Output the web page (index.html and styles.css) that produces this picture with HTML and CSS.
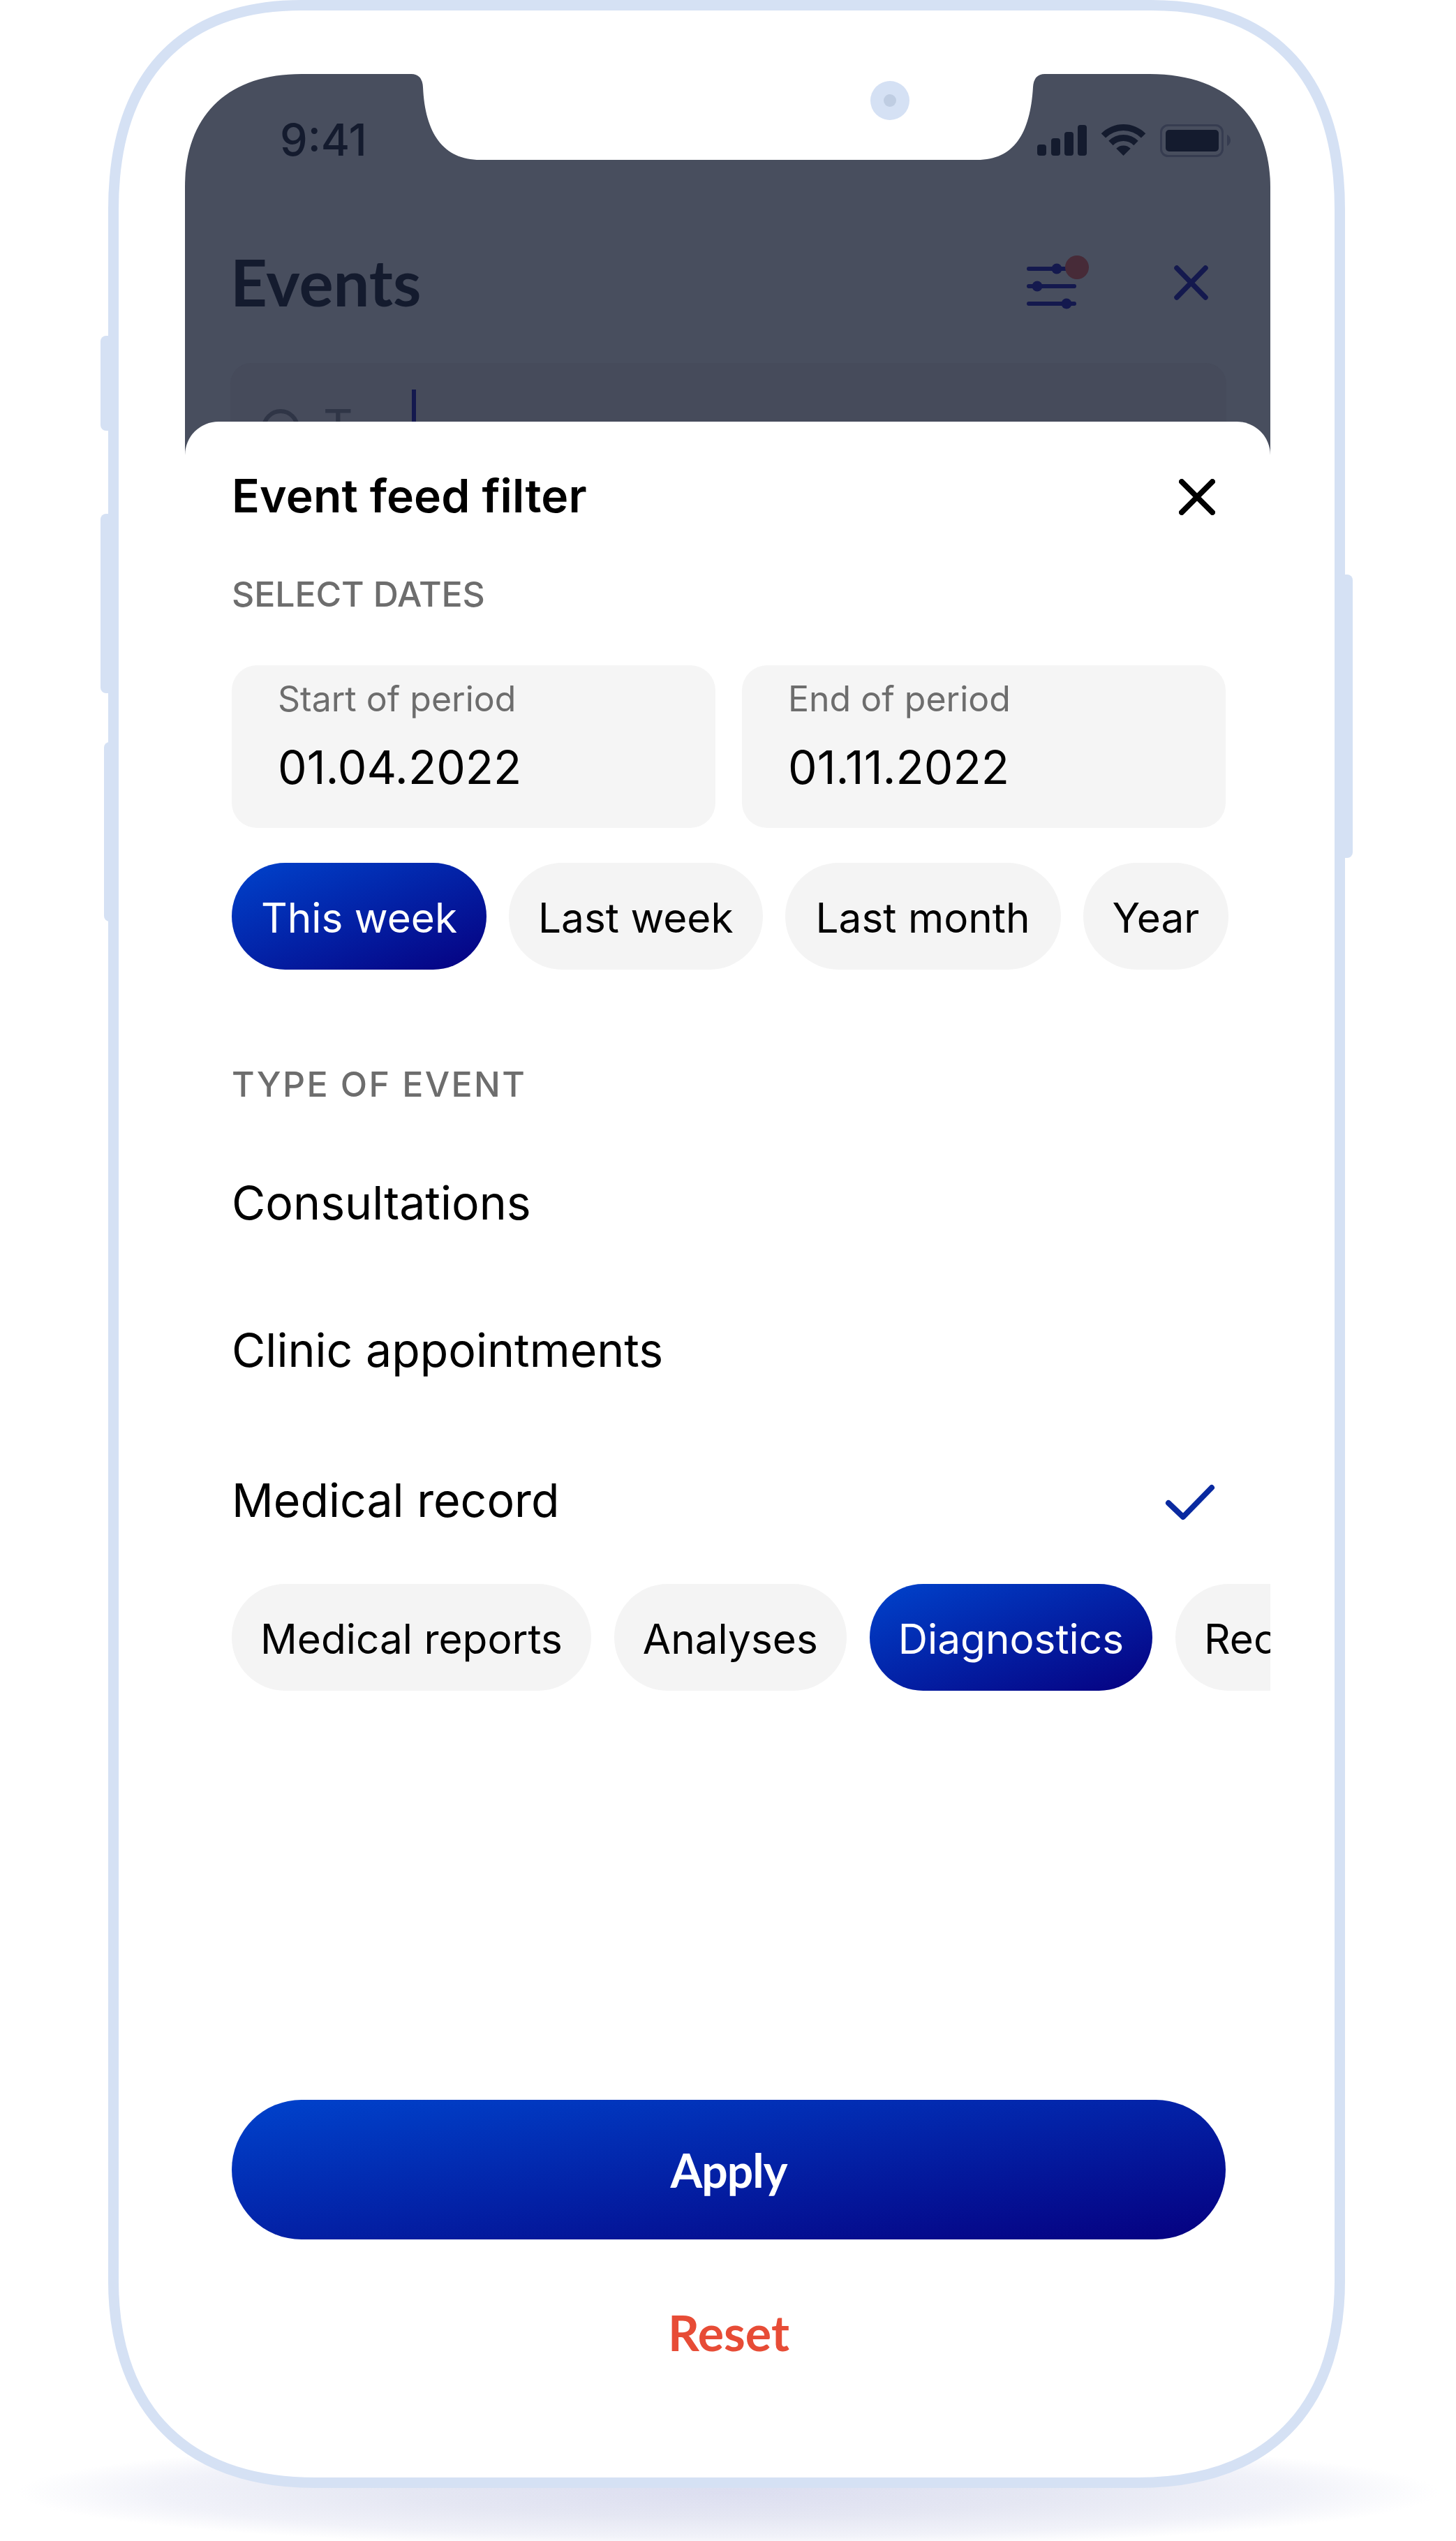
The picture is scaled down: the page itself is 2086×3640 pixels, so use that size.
FILE: index.html
```html
<!DOCTYPE html>
<html lang="en">
<head>
<meta charset="utf-8">
<title>Event feed filter</title>
<link rel="stylesheet" href="styles.css">
</head>
<body>
<div class="stage">
  <div class="floor-shadow"></div>
  <div class="side-btn side-btn-a"></div>
  <div class="side-btn side-btn-b"></div>
  <div class="side-btn side-btn-c"></div>
  <div class="side-btn side-btn-r"></div>
  <div class="phone">
    <svg class="frame" width="1772" height="3564" viewBox="0 0 1772 3564">
      <path d="M7.5 300C7.5 115 100 7.5 277 7.5L1495 7.5C1672 7.5 1764.5 115 1764.5 300L1764.5 3268C1764.5 3430 1680 3556.5 1475 3556.5L297 3556.5C92 3556.5 7.5 3430 7.5 3268Z" fill="#fff" stroke="#d5e1f4" stroke-width="15"/>
    </svg>
    <div class="camera"><div class="lens"></div></div>
    <div class="screen">
      <div class="app">
        <div class="status">
          <span class="time">9:41</span>
          <svg class="status-icons" width="277" height="47" viewBox="0 0 277 47">
            <rect x="0" y="29" width="13" height="16" rx="4" fill="#141b2e"/>
            <rect x="20" y="20" width="13" height="25" rx="4" fill="#141b2e"/>
            <rect x="39" y="11" width="13" height="34" rx="4" fill="#141b2e"/>
            <rect x="58" y="1" width="13" height="44" rx="4" fill="#141b2e"/>
            <g transform="translate(92 0)" fill="#141b2e">
              <path d="M-.3 13.2A45 45 0 0 1 63.3 13.2L56.9 19.6A36 36 0 0 0 6.1 19.6Z"/>
              <path d="M10.3 23.8A30 30 0 0 1 52.7 23.8L46.35 30.15A21 21 0 0 0 16.65 30.15Z"/>
              <path d="M21.25 34.75A14.5 14.5 0 0 1 41.75 34.75L31.5 45Z"/>
            </g>
            <rect x="177.5" y="1.5" width="88" height="44" rx="10" fill="none" stroke="#363c50" stroke-width="3"/>
            <rect x="184" y="8" width="76" height="31" rx="5" fill="#141b2e"/>
            <path d="M272 15C275 16 277 20 277 23C277 26 275 30 272 31Z" fill="#363c50"/>
          </svg>
        </div>
        <div class="app-head">
          <h1 class="app-title">Events</h1>
          <svg class="filter-icon" width="91" height="78" viewBox="0 0 91 78">
            <g stroke="#14194e" stroke-width="6" stroke-linecap="round">
              <line x1="3" y1="19" x2="68" y2="19"/>
              <line x1="3" y1="44" x2="68" y2="44"/>
              <line x1="3" y1="69" x2="68" y2="69"/>
            </g>
            <circle cx="43" cy="19" r="7.5" fill="#14194e"/>
            <circle cx="15" cy="44" r="7.5" fill="#14194e"/>
            <circle cx="57" cy="69" r="7.5" fill="#14194e"/>
            <circle cx="72" cy="17" r="17" fill="#472b38"/>
          </svg>
          <svg class="app-close" width="49" height="50" viewBox="0 0 49 50">
            <path d="M4 4L45 46M45 4L4 46" stroke="#14194e" stroke-width="7.5" stroke-linecap="round" fill="none"/>
          </svg>
        </div>
        <div class="search">
          <svg class="search-icon" width="56" height="56" viewBox="0 0 56 56"><circle cx="28" cy="28" r="24" fill="none" stroke="#2f3546" stroke-width="6"/></svg>
          <span class="search-text">T</span>
          <span class="caret"></span>
        </div>
      </div>
      <div class="sheet">
        <div class="sheet-head">
          <h2 class="sheet-title">Event feed filter</h2>
          <svg class="sheet-close" width="52" height="52" viewBox="0 0 52 52">
            <path d="M4 4L48 48M48 4L4 48" stroke="#000" stroke-width="8" stroke-linecap="round" fill="none"/>
          </svg>
        </div>
        <div class="section-label first">SELECT DATES</div>
        <div class="dates">
          <div class="date-card">
            <div class="date-label">Start of period</div>
            <div class="date-value">01.04.2022</div>
          </div>
          <div class="date-card">
            <div class="date-label">End of period</div>
            <div class="date-value">01.11.2022</div>
          </div>
        </div>
        <div class="chips period-chips">
          <span class="chip active">This week</span>
          <span class="chip">Last week</span>
          <span class="chip wide">Last month</span>
          <span class="chip">Year</span>
        </div>
        <div class="section-label second">TYPE OF EVENT</div>
        <div class="type-list">
          <div class="type-row">Consultations</div>
          <div class="type-row">Clinic appointments</div>
          <div class="type-row">Medical record
            <svg class="check" width="72" height="52" viewBox="0 0 72 52">
              <path d="M5 27L26 47L67 5" stroke="#0a2aa0" stroke-width="8" stroke-linecap="round" stroke-linejoin="round" fill="none"/>
            </svg>
          </div>
        </div>
        <div class="chips record-chips">
          <span class="chip">Medical reports</span>
          <span class="chip">Analyses</span>
          <span class="chip active">Diagnostics</span>
          <span class="chip">Recommendations</span>
        </div>
        <button class="apply" type="button">Apply</button>
        <div class="reset">Reset</div>
      </div>
    </div>
  </div>
</div>
</body>
</html>
```
FILE: styles.css
```css
* { box-sizing: border-box; }
html, body { margin: 0; padding: 0; background: #fff; }
body { font-family: Inter, "Liberation Sans", sans-serif; color: #000; }
h1, h2 { margin: 0; font: inherit; }

.stage { position: relative; width: 2086px; height: 3640px; overflow: hidden; background: #fff; }

.floor-shadow {
  position: absolute; left: 24px; top: 3490px; width: 2038px; height: 160px;
  background: radial-gradient(closest-side, #dcdef0 0%, #e5e7f3 45%, #f1f2f9 80%, #fff 100%);
}

.side-btn { position: absolute; background: #d5e1f4; border-radius: 8px 0 0 8px; }
.side-btn-a { left: 144px; top: 481px; width: 30px; height: 136px; }
.side-btn-b { left: 144px; top: 736px; width: 30px; height: 257px; }
.side-btn-c { left: 149px; top: 1063px; width: 30px; height: 257px; }
.side-btn-r { left: 1900px; top: 823px; width: 38px; height: 406px; border-radius: 0 8px 8px 0; }

.phone {
  position: relative; margin-left: 155px; width: 1772px; height: 3564px;
  padding: 106px 107px 0 110px;
}
.frame { position: absolute; left: 0; top: 0; }

.camera {
  position: absolute; left: 1092px; top: 116px; width: 56px; height: 56px;
  display: flex; align-items: center; justify-content: center;
  background: #d5e1f4; border-radius: 50%;
}
.lens { width: 18px; height: 18px; border-radius: 50%; background: #bfcde2; }

.screen {
  position: relative;
  width: 1555px; height: 3334px; display: flex; flex-direction: column;
  clip-path: path("M0 162C0 60 60 0 167 0L324 0Q340 0 341 19C344 85 370 123 423 123L1135 123C1188 123 1211 85 1215 19Q1216 0 1232 0L1382 0C1490 0 1555 60 1555 162L1555 3334L0 3334Z");
}

.app { height: 546px; margin-bottom: -48px; flex: none; overflow: hidden; background: #484e5e; color: #141b2e; }

.status { display: flex; justify-content: space-between; align-items: flex-start; height: 230px; padding: 64px 57px 0 137px; }
.status-icons { margin-top: 8px; }
.time { font-size: 63px; line-height: 60px; font-weight: 500; margin-left: -1px; }

.app-head { display: flex; align-items: center; height: 124px; padding: 12px 89px 0 65px; }
.app-title { font-family: Lato, Inter, sans-serif; font-weight: 700; font-size: 92px; line-height: 100px; flex: 1; }
.filter-icon { margin-right: 120px; margin-top: 2px; flex: none; }
.app-close { flex: none; margin-top: 2px; }

.search {
  display: flex; align-items: flex-start; margin: 60px 63px 0 65px; height: 200px;
  padding: 38px 0 0 44px; background: #464b5b; border-radius: 30px;
}
.search-icon { margin-top: 27px; flex: none; }
.search-text { margin-left: 33px; margin-top: 12px; font-size: 66px; line-height: 80px; color: #2f3546; }
.caret { width: 6px; height: 90px; margin-left: 84px; background: #14194e; flex: none; }

.sheet {
  flex: 1; display: flex; flex-direction: column; position: relative;
  padding: 66px 64px 49px 67px; background: #fff; border-radius: 48px 48px 0 0; overflow: hidden;
}
.sheet-head { display: flex; align-items: center; justify-content: space-between; height: 80px; padding-right: 15px; }
.sheet-title { font-size: 66px; line-height: 80px; font-weight: 600; letter-spacing: .15px; }
.sheet-close { flex: none; margin-top: 4px; }

.section-label { height: 60px; font-size: 50px; line-height: 60px; font-weight: 500; color: #6d6d6d; }
.section-label.first { margin-top: 71px; letter-spacing: -.1px; }
.section-label.second { margin-top: 134px; letter-spacing: 2.4px; }

.dates { display: flex; gap: 38px; margin-top: 72px; }
.date-card { flex: 1; height: 233px; padding: 20px 0 0 66px; background: #f5f5f5; border-radius: 36px; }
.date-label { font-size: 50px; line-height: 56px; color: #6d6d6d; }
.date-value { margin-top: 30px; font-size: 66px; line-height: 80px; }

.chips { display: flex; gap: 33px; flex: none; }
.period-chips { margin-top: 50px; width: 1500px; gap: 32px; }
.record-chips { margin-top: 14px; }
.chip {
  flex: none; height: 153px; display: flex; align-items: center; padding: 3px 41px 0;
  font-size: 58.5px; background: #f4f4f4; border-radius: 77px; white-space: nowrap;
}
.period-chips .chip { padding: 3px 42px 0; }
.period-chips .chip.wide { padding: 3px 44px 0; }
.chip.active { color: #fff; background: linear-gradient(to bottom right, #0043cc 0%, #060080 100%); }

.type-list { margin-top: 33px; }
.type-row { display: flex; align-items: center; justify-content: space-between; height: 213px; font-size: 66.2px; padding-right: 15px; }
.type-row:nth-child(2) { padding-bottom: 3px; }
.check { margin-top: 6px; }

.apply {
  flex: none; margin-top: auto; height: 200px; border: 0; border-radius: 100px; color: #fff;
  font-family: Lato, Inter, sans-serif; font-size: 66px; font-weight: 700; letter-spacing: -1px;
  background: linear-gradient(to bottom right, #0043cc 0%, #060080 100%);
}
.reset {
  flex: none; margin-top: 83px; height: 100px; text-align: center;
  font-family: Lato, Inter, sans-serif; font-size: 70px; line-height: 100px; font-weight: 700; color: #e74c36;
}
```
